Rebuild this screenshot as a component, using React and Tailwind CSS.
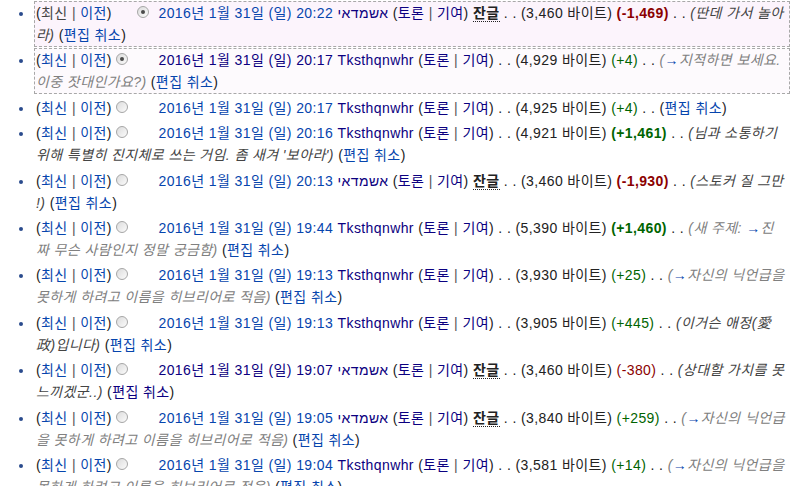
import React from 'react';

const BLUE = 'text-[#0645ad]';
const VISITED = 'text-[#0b0080]';

const rows = [
  { sel: 'a', first: true, time: '20:22', user: 'אשמדאי', heb: true, minor: true, size: '3,460', diff: '-1,469', comment: { text: ['딴데 가서 놀아라'] } },
  { sel: 'b', dateVisited: true, time: '20:17', user: 'Tksthqnwhr', size: '4,929', diff: '+4', comment: { auto: true, arrow: true, text: ['지적하면 보세요. 이중 잣대인가요?'] } },
  { time: '20:17', user: 'Tksthqnwhr', size: '4,925', diff: '+4' },
  { time: '20:16', user: 'Tksthqnwhr', size: '4,921', diff: '+1,461', comment: { text: ['님과 소통하기 위해 특별히 진지체로 쓰는 거임. 좀 새겨 \'보아라\''] } },
  { time: '20:13', user: 'אשמדאי', heb: true, minor: true, size: '3,460', diff: '-1,930', comment: { text: ['스토커 질 그만', '!'] } },
  { time: '19:44', user: 'Tksthqnwhr', size: '5,390', diff: '+1,460', comment: { auto: true, prefix: '새 주제: ', arrow: true, text: ['진', '짜 무슨 사람인지 정말 궁금함'] } },
  { time: '19:13', user: 'Tksthqnwhr', size: '3,930', diff: '+25', comment: { auto: true, arrow: true, text: ['자신의 닉언급을 못하게 하려고 이름을 히브리어로 적음'] } },
  { time: '19:13', user: 'Tksthqnwhr', size: '3,905', diff: '+445', comment: { text: ['이거슨 애정(愛政)입니다'] } },
  { time: '19:07', user: 'אשמדאי', heb: true, minor: true, visited: true, dateVisited: true, size: '3,460', diff: '-380', comment: { text: ['상대할 가치를 못느끼겠군..'] } },
  { time: '19:05', user: 'אשמדאי', heb: true, minor: true, size: '3,840', diff: '+259', comment: { auto: true, arrow: true, text: ['자신의 닉언급을 못하게 하려고 이름을 히브리어로 적음'] } },
  { time: '19:04', user: 'Tksthqnwhr', size: '3,581', diff: '+14', comment: { auto: true, arrow: true, text: ['자신의 닉언급을 못하게 하려고 이름을 히브리어로 적음'] } },
];

const Radio = ({ checked, hidden }) => (
  <span className={`inline-block w-[12px] h-[12px] rounded-full border border-[#a6a6a6] bg-gradient-to-br from-[#dcdcdc] to-[#fbfbfb] align-[0px] relative ${hidden ? 'invisible' : ''}`}>
    {checked && <span className="absolute left-[3px] top-[3px] w-[4px] h-[4px] rounded-full bg-[#4a4a4a]" />}
  </span>
);

const Diff = ({ value }) => {
  const n = parseInt(value.replace(/,/g, ''), 10);
  const big = Math.abs(n) >= 500;
  const color = n < 0 ? 'text-[#8b0000]' : 'text-[#006400]';
  return <span className={`${color} ${big ? 'font-bold' : ''}`}>({value})</span>;
};

// text is split where the reference wraps the line
const Text = ({ parts }) => parts.map((p, i) => (
  <React.Fragment key={i}>{i > 0 && <br />}{p}</React.Fragment>
));

const Comment = ({ c }) => {
  if (c.auto) {
    return (
      <span className="italic text-[#808080]">
        ({c.prefix}{c.arrow && <span className={BLUE}>→</span>}<Text parts={c.text} />)
      </span>
    );
  }
  return <span className="italic text-[#444]">(<Text parts={c.text} />)</span>;
};

const Row = ({ r }) => {
  const box = r.sel === 'a'
    ? 'border-[#a8a8a8] border-dashed bg-[#fcf4fc]'
    : r.sel === 'b'
      ? 'border-[#a8a8a8] border-dashed bg-[#fdfafd]'
      : 'border-transparent';
  const dateColor = r.dateVisited ? VISITED : BLUE;
  return (
    <li className={`border px-[1px] mb-[1.4px] ${box}`}>
      (
      {r.first ? <span className="text-[#444]">최신</span> : <a className={BLUE}>최신</a>}
      <span className="text-[#555]"> | </span>
      <a className={BLUE}>이전</a>)
      <span className="inline-block w-[4.6px]" />
      <Radio checked={r.sel === 'b'} hidden={r.sel === 'a'} />
      <span className="inline-block w-[9px]" />
      <Radio checked={r.sel === 'a'} hidden={r.sel !== 'a'} />
      <span className="inline-block w-[9px]" />
      <a className={dateColor}>2016년 1월 31일 (일) {r.time}</a>{' '}
      <a className={VISITED}>{r.heb ? <bdi dir="rtl">{r.user}</bdi> : r.user}</a>{' '}
      (<a className={VISITED}>토론</a><span className="text-[#555]"> | </span><a className={VISITED}>기여</a>){' '}
      {r.minor && <><abbr className="font-bold no-underline border-b border-dotted border-[#222]">잔글</abbr>{' '}</>}
      . . (<span>{r.size} 바이트</span>) <Diff value={r.diff} /> . .{' '}
      {r.comment && <><Comment c={r.comment} />{' '}</>}
      (<a className={r.visited ? VISITED : BLUE}>편집 취소</a>)
    </li>
  );
};

export default function App() {
  return (
    <div className="w-[800px] h-[486px] overflow-hidden bg-white text-[#222] text-[14px] leading-[22px] tracking-[0.4px] font-['Liberation_Sans','Noto_Sans_CJK_KR',sans-serif]">
      <ul className="list-disc marker:text-[#2a4b8d] pl-[34px] pr-[10px] pt-[1px]">
        {rows.map((r, i) => <Row key={i} r={r} />)}
      </ul>
    </div>
  );
}
